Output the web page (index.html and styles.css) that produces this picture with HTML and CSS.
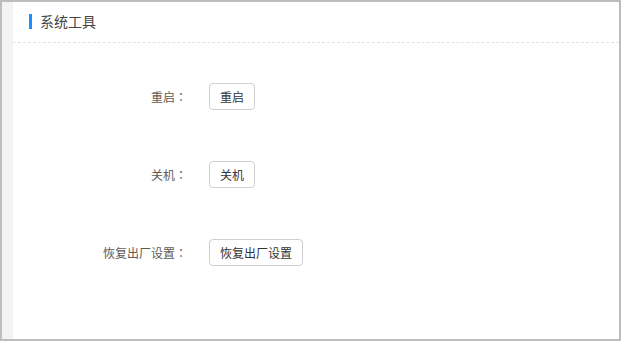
FILE: index.html
```html
<!DOCTYPE html>
<html>
	<head>
		<meta charset="utf-8">
		<title>系统工具</title>
		<link rel="stylesheet" href="styles.css">
	</head>
	<body>
		<div id="frame">
			<div class="panel">
				<div class="head">
					<span class="bar"></span>
					<span class="title">系统工具</span>
				</div>
				<div class="form">
					<div class="row">
						<label class="label">重启<span class="colon">：</span></label>
						<button class="btn">重启</button>
					</div>
					<div class="row">
						<label class="label">关机<span class="colon">：</span></label>
						<button class="btn">关机</button>
					</div>
					<div class="row">
						<label class="label">恢复出厂设置<span class="colon">：</span></label>
						<button class="btn">恢复出厂设置</button>
					</div>
				</div>
			</div>
		</div>
	</body>
</html>
```

FILE: styles.css
```css
*{
	margin: 0;
	padding: 0;
	box-sizing: border-box;
}

body{
	font-family: "Noto Sans CJK SC", "Liberation Sans", sans-serif;
	font-size: 12px;
}

#frame{
	width: 621px;
	height: 341px;
	border: 2px solid #bdbdbd;
	background: #f3f3f3;
	padding-left: 11px;
	display: flex;
}

.panel{
	flex: 1;
	background: #fff;
}

.head{
	height: 41px;
	border-bottom: 1px dashed #e3e3e3;
	display: flex;
	align-items: center;
	padding-left: 16px;
	padding-bottom: 2px;
}

.bar{
	width: 3px;
	height: 15px;
	background: #1890ff;
	margin-right: 8px;
}

.title{
	font-size: 14px;
	color: #444;
}

.form{
	padding-top: 40px;
	display: flex;
	flex-direction: column;
	gap: 51px;
}

.row{
	display: flex;
	align-items: center;
	height: 27px;
}

.label{
	width: 174px;
	text-align: right;
	color: #5f5a55;
	margin-right: 22px;
}

/* 冒号居中显示 */
.colon{
	font-family: "Noto Sans CJK TC", sans-serif;
}

.btn{
	height: 27px;
	padding: 0 10px;
	border: 1px solid #cfcfcf;
	border-radius: 4px;
	background: #fff;
	color: #333;
	font-family: inherit;
	font-size: 12px;
}
```
